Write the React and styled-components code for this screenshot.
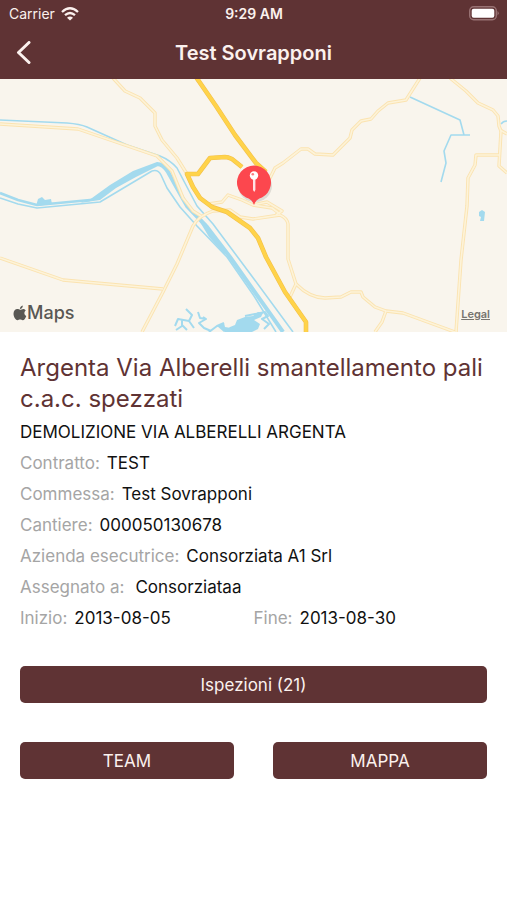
import React from 'react';
import styled, { createGlobalStyle } from 'styled-components';

const colors = {
  primary: '#5f3334',
  on_primary: '#fbf1ee',
  text: '#111',
  text_light: '#a5a5a5',
  land: '#f9f5ed',
  water: '#a3daee',
  road: '#fbe3b0',
  road_fill: '#fdf3d9',
  highway: '#ffd34a',
  highway_edge: '#f3c04a',
  pin: '#fc474e',
};

const GlobalStyle = createGlobalStyle`
  * {
    box-sizing: border-box;
  }

  body {
    margin: 0;
    background: #fff;
    color: ${colors.text};
    font-family: Inter, "Liberation Sans", sans-serif;
    font-size: 17px;
  }
`;

const Header = styled.header`
  background: ${colors.primary};
  color: ${colors.on_primary};
`;

const StatusBar = styled.div`
  display: grid;
  grid-template-columns: 1fr auto 1fr;
  align-items: center;
  height: 27px;
  padding: 0 8px 0 9px;
  font-size: 14px;

  .status__carrier {
    display: flex;
    align-items: center;
    gap: 6px;
  }

  .status__time {
    font-weight: 600;
  }

  .status__battery {
    justify-self: end;
  }

  svg {
    display: block;
  }
`;

const NavBar = styled.div`
  display: grid;
  grid-template-columns: 48px 1fr 48px;
  align-items: center;
  height: 52px;
`;

const BackButton = styled.button`
  display: flex;
  align-items: center;
  height: 44px;
  padding: 0 0 0 16px;
  border: none;
  background: none;
  color: inherit;
`;

const NavTitle = styled.h1`
  margin: 0;
  font-size: 20px;
  font-weight: 600;
  line-height: 24px;
  text-align: center;
`;

const MapView = styled.section`
  position: relative;
  height: 253px;
  overflow: hidden;
  background: ${colors.land};
`;

const MapCanvas = styled.svg`
  display: block;
  width: 100%;
  height: 100%;
`;

const MapBrand = styled.div`
  position: absolute;
  left: 13px;
  bottom: 8px;
  display: flex;
  align-items: center;
  color: #595854;
  font-size: 18px;
  font-weight: 500;
  line-height: 22px;
`;

const LegalLink = styled.a`
  position: absolute;
  right: 17px;
  bottom: 10px;
  color: #77746f;
  font-size: 11px;
  font-weight: 600;
  line-height: 16px;
`;

const Content = styled.main`
  padding: 20px;
`;

const Title = styled.h2`
  margin: 0 0 3px;
  color: ${colors.primary};
  font-size: 24px;
  font-weight: 400;
  line-height: 31px;
`;

const Row = styled.p`
  margin: 0;
  line-height: 31px;
`;

const Columns = styled.div`
  display: grid;
  grid-template-columns: 1fr 1fr;
  column-gap: ${({ $gap }) => $gap || 0}px;
`;

const Label = styled.span`
  margin-right: ${({ $wide }) => ($wide ? 11 : 7)}px;
  color: ${colors.text_light};
`;

const Actions = styled.div`
  display: grid;
  gap: 39px;
  margin-top: 32px;
`;

const Button = styled.button`
  width: 100%;
  height: 37px;
  padding: 0;
  border: none;
  border-radius: 5px;
  background: ${colors.primary};
  color: ${colors.on_primary};
  font-family: inherit;
  font-size: 17px;
`;

const details = [
  { label: 'Contratto:', value: 'TEST' },
  { label: 'Commessa:', value: 'Test Sovrapponi' },
  { label: 'Cantiere:', value: '000050130678' },
  { label: 'Azienda esecutrice:', value: 'Consorziata A1 Srl' },
  { label: 'Assegnato a:', value: 'Consorziataa', wide: true },
];

const roads = [
  'M113 78L125 91L140 98L155 113V126L162 140L177 158L187 174',
  'M0 124L78 129L157 156L172 171L183 198L193 211L201 216',
  'M0 258L63 280L163 289',
  'M142 332L163 292L177 264L193 226Q198 216 213 211L230 210L240 217L253 219L280 215Q287 218 288 224V259L296 284L290 297',
  'M296 284Q310 298 325 298L341 297L351 292H361L363 297L375 307L386 311L403 313L455 332',
  'M386 311L382 322L375 332',
  'M456 332L461 260L467 206L468 178L475 165L476 155H499',
  'M450 78L466 91L478 103L493 110L498 116L499 126L501 131L499 166L507 173',
  'M500 130L507 134',
  'M420 78L406 100L388 103L378 111L371 119L361 121L352 130L350 138L333 155L315 154L308 149H301L283 163L275 168L269 180',
  'M208 204L222 202L228 195L242 200L253 205L272 208L280 214',
  'M253 205L267 202L282 211L276 215',
];

const highways = [
  'M196 77L216 106L235 135L256 163L266 172',
  'M242 167L232 159Q228 157 225 157L210 158L198 174L187 174L193 187L200 198L212 207L227 212L250 228L258 238L266 257L285 292L306 322V333',
];

const canals = [
  'M0 120L67 123Q80 124 87 127L127 145L160 156Q170 160 177 168L197 206L213 224L254 279L293 332',
  'M152 171Q158 169 161 175L167 188L180 207L197 226L227 257L254 296L276 332',
  'M0 198L18 204L37 208L100 202L152 171',
  'M410 97L460 120L464 135H470M464 135H451L444 151L446 163L441 182',
  'M501 124Q503 121 507 121',
];

const WifiIcon = () => (
  <svg width="18" height="14" viewBox="0 0 18 14" fill="none" stroke="currentColor" strokeWidth="2.3" aria-hidden="true">
    <path d="M1 5Q9 -2.4 17 5" />
    <path d="M4 8.2Q9 3.8 14 8.2" />
    <path d="M9 13.6L6 10.7Q9 8.3 12 10.7Z" fill="currentColor" stroke="none" />
  </svg>
);

const BatteryIcon = () => (
  <svg width="30" height="15" viewBox="0 0 30 15" aria-hidden="true">
    <rect x=".7" y=".7" width="26.6" height="13" rx="4" fill="none" stroke="#987273" strokeWidth="1.4" />
    <rect x="2.7" y="2.7" width="22.6" height="9" rx="2" fill="#fff" />
    <path d="M28.5 5Q31 7.2 28.5 9.4Z" fill="#987273" />
  </svg>
);

const BackIcon = () => (
  <svg width="16" height="24" viewBox="0 0 16 24" fill="none" stroke="currentColor" strokeWidth="3" strokeLinecap="round" strokeLinejoin="round" aria-hidden="true">
    <path d="M13 1.500L2.500 11.500L13 21.500" />
  </svg>
);

const AppleIcon = () => (
  <svg width="14" height="17" viewBox="0 0 14 17" fill="currentColor" aria-hidden="true">
    <path d="M9.8 .5C9.9 2.5 8.500 4 6.900 4C6.800 2.200 8.200 .7 9.800 .5Z" />
    <path d="M12.800 5.500C10.800 7 11 9.900 13.300 10.900C12.600 13 11.200 15.200 9.700 15.200C8.700 15.200 8.300 14.600 7.100 14.600C5.900 14.600 5.500 15.200 4.600 15.200C2.800 15.200 .5 11.900 .5 8.700C.5 5.900 2.300 4 4.300 4C5.500 4 6.300 4.700 7.200 4.700C8 4.700 9 3.900 10.400 3.900C11.300 3.900 12.200 4.400 12.800 5.500Z" />
  </svg>
);

const SiteMap = () => (
  <MapCanvas viewBox="0 79 507 253" preserveAspectRatio="xMidYMid slice" role="img" aria-label="Argenta">
    <g fill="none" stroke={colors.water} strokeLinejoin="round">
      {canals.map((d) => <path key={d} d={d} strokeWidth="1.6" />)}
      <path d="M0 193L18 200L37 205L90 200" strokeWidth="2.6" />
      <path d="M157 164Q163 164 168 172L178 190L187 206L207 227L230 257L254 291L283 332" strokeWidth="4" />
    </g>

    {/* river bends and lakes */}
    <g fill={colors.water}>
      <path d="M36 206L38 199L42 197L45 200L51 199L52 204Z" />
      <path d="M80 203L92 198L110 185L133 171L157 162L160 165L136 177L116 188L100 200Z" />
      <path d="M200 222L206 223L208 229L212 233L226 253L224 254L209 237Z" />
      <path d="M479 212L482 210L485 212L484 221L480 221L481 217L479 216Z" />
      <path d="M224 332L230 327L235 325L237 320L245 317L253 316L258 312L263 313L261 317L254 320L260 324L258 329L252 332Z" />
      <path d="M217 326L224 323L225 327L231 328L224 332Z" />
    </g>
    <g fill="none" stroke={colors.water} strokeWidth="2" strokeLinejoin="round">
      <path d="M186 309L192 315L189 321L178 319L175 326M189 321L194 328M176 330L182 326V319M182 325L187 330" />
      <path d="M198 312L200 318L206 319L199 323L204 328L211 331M206 319L203 317" />
      <path d="M209 332L217 326L224 323M245 316L265 312L268 316L262 319L269 324L264 329" />
    </g>

    <g fill="none" strokeLinejoin="round">
      {roads.map((d) => <path key={d} d={d} stroke={colors.road} strokeWidth="3.4" />)}
      {roads.map((d) => <path key={d} d={d} stroke={colors.road_fill} strokeWidth="1.6" />)}
      {highways.map((d) => <path key={d} d={d} stroke={colors.highway_edge} strokeWidth="4.6" />)}
      {highways.map((d) => <path key={d} d={d} stroke={colors.highway} strokeWidth="3.4" />)}
    </g>

    <ellipse cx="255" cy="186" rx="17" ry="16" fill="#000" opacity=".1" />
    <path d="M254 205C252 200 250 199 246 197.500A17 17 0 1 1 262 197.500C258 199 256 200 254 205Z" fill={colors.pin} />
    <path d="M253 177H255.400V190L254.200 192L253 190Z" fill="#fff" opacity=".85" />
    <circle cx="254" cy="175.500" r="4.200" fill="#fff" />
    <circle cx="252.800" cy="174.300" r="1.300" fill={colors.pin} opacity=".7" />
  </MapCanvas>
);

const App = () => (
  <>
    <GlobalStyle />

    <Header>
      <StatusBar>
        <span className="status__carrier">Carrier <WifiIcon /></span>
        <span className="status__time">9:29 AM</span>
        <span className="status__battery"><BatteryIcon /></span>
      </StatusBar>

      <NavBar>
        <BackButton type="button" aria-label="Indietro"><BackIcon /></BackButton>
        <NavTitle>Test Sovrapponi</NavTitle>
      </NavBar>
    </Header>

    <MapView>
      <SiteMap />
      <MapBrand><AppleIcon />Maps</MapBrand>
      <LegalLink href="#legal">Legal</LegalLink>
    </MapView>

    <Content>
      <Title>Argenta Via Alberelli smantellamento pali c.a.c. spezzati</Title>
      <Row>DEMOLIZIONE VIA ALBERELLI ARGENTA</Row>

      {details.map(({ label, value, wide }) => <Row key={label}>
        <Label $wide={wide}>{label}</Label>{value}
      </Row>)}

      <Columns>
        <Row><Label>Inizio:</Label>2013-08-05</Row>
        <Row><Label>Fine:</Label>2013-08-30</Row>
      </Columns>

      <Actions>
        <Button type="button">Ispezioni (21)</Button>
        <Columns $gap={39}>
          <Button type="button">TEAM</Button>
          <Button type="button">MAPPA</Button>
        </Columns>
      </Actions>
    </Content>
  </>
);

export default App;
